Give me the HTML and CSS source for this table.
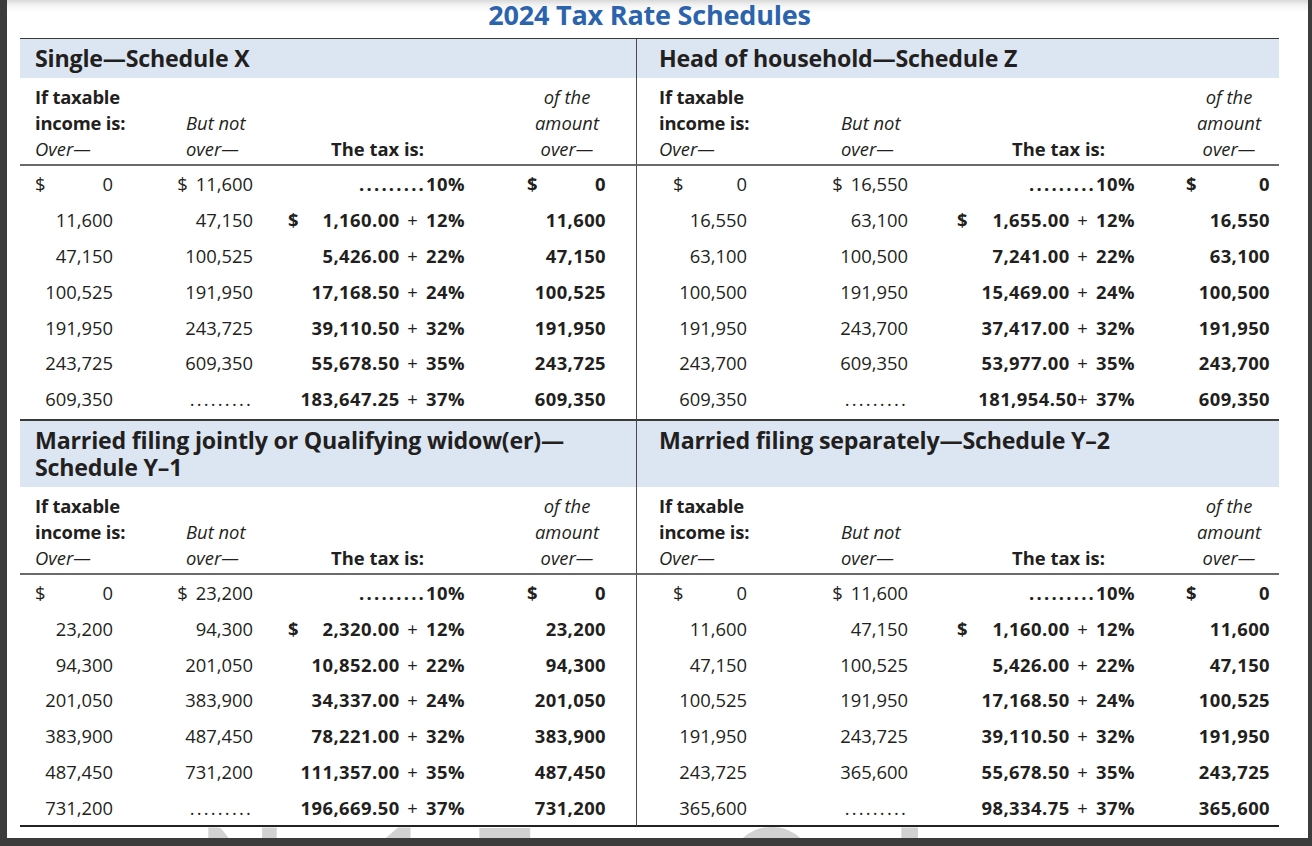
FILE: index.html
```html
<!DOCTYPE html>
<html lang="en">
<head>
<meta charset="utf-8">
<title>2024 Tax Rate Schedules</title>
<link rel="stylesheet" href="styles.css">
</head>
<body>
<div class="page">
  <h1 class="title">2024 Tax Rate Schedules</h1>
  <div class="table">
    <div class="sched">
      <div class="band l">Single—Schedule X</div>
      <div class="band r">Head of household—Schedule Z</div>

      <div class="head l">
        <div class="h1"><b>If taxable</b><b>income is:</b><i>Over—</i></div>
        <div class="h2"><i>But not</i><i>over—</i></div>
        <div class="h3">The tax is:</div>
        <div class="h4"><i>of the</i><i>amount</i><i>over—</i></div>
      </div>
      <div class="head r">
        <div class="h1"><b>If taxable</b><b>income is:</b><i>Over—</i></div>
        <div class="h2"><i>But not</i><i>over—</i></div>
        <div class="h3">The tax is:</div>
        <div class="h4"><i>of the</i><i>amount</i><i>over—</i></div>
      </div>

      <div class="body l">
        <div class="row"><div class="c1"><span class="d">$</span><span>0</span></div><div class="c2"><span>$ 11,600</span></div><div class="c3"><span><span class="dots">.........</span>10%</span></div><div class="c4"><span class="d">$</span><span>0</span></div></div>
        <div class="row"><div class="c1"><span>11,600</span></div><div class="c2"><span>47,150</span></div><div class="c3"><span class="d">$</span><span>1,160.00 <span class="plus">+</span> 12%</span></div><div class="c4"><span>11,600</span></div></div>
        <div class="row"><div class="c1"><span>47,150</span></div><div class="c2"><span>100,525</span></div><div class="c3"><span>5,426.00 <span class="plus">+</span> 22%</span></div><div class="c4"><span>47,150</span></div></div>
        <div class="row"><div class="c1"><span>100,525</span></div><div class="c2"><span>191,950</span></div><div class="c3"><span>17,168.50 <span class="plus">+</span> 24%</span></div><div class="c4"><span>100,525</span></div></div>
        <div class="row"><div class="c1"><span>191,950</span></div><div class="c2"><span>243,725</span></div><div class="c3"><span>39,110.50 <span class="plus">+</span> 32%</span></div><div class="c4"><span>191,950</span></div></div>
        <div class="row"><div class="c1"><span>243,725</span></div><div class="c2"><span>609,350</span></div><div class="c3"><span>55,678.50 <span class="plus">+</span> 35%</span></div><div class="c4"><span>243,725</span></div></div>
        <div class="row"><div class="c1"><span>609,350</span></div><div class="c2"><span class="dots">.........</span></div><div class="c3"><span>183,647.25 <span class="plus">+</span> 37%</span></div><div class="c4"><span>609,350</span></div></div>
      </div>
      <div class="body r">
        <div class="row"><div class="c1"><span class="d">$</span><span>0</span></div><div class="c2"><span>$ 16,550</span></div><div class="c3"><span><span class="dots">.........</span>10%</span></div><div class="c4"><span class="d">$</span><span>0</span></div></div>
        <div class="row"><div class="c1"><span>16,550</span></div><div class="c2"><span>63,100</span></div><div class="c3"><span class="d">$</span><span>1,655.00 <span class="plus">+</span> 12%</span></div><div class="c4"><span>16,550</span></div></div>
        <div class="row"><div class="c1"><span>63,100</span></div><div class="c2"><span>100,500</span></div><div class="c3"><span>7,241.00 <span class="plus">+</span> 22%</span></div><div class="c4"><span>63,100</span></div></div>
        <div class="row"><div class="c1"><span>100,500</span></div><div class="c2"><span>191,950</span></div><div class="c3"><span>15,469.00 <span class="plus">+</span> 24%</span></div><div class="c4"><span>100,500</span></div></div>
        <div class="row"><div class="c1"><span>191,950</span></div><div class="c2"><span>243,700</span></div><div class="c3"><span>37,417.00 <span class="plus">+</span> 32%</span></div><div class="c4"><span>191,950</span></div></div>
        <div class="row"><div class="c1"><span>243,700</span></div><div class="c2"><span>609,350</span></div><div class="c3"><span>53,977.00 <span class="plus">+</span> 35%</span></div><div class="c4"><span>243,700</span></div></div>
        <div class="row"><div class="c1"><span>609,350</span></div><div class="c2"><span class="dots">.........</span></div><div class="c3"><span>181,954.50<span class="plus">+</span> 37%</span></div><div class="c4"><span>609,350</span></div></div>
      </div>
    </div>

    <div class="sched">
      <div class="band l">Married filing jointly or Qualifying widow(er)—<br>Schedule Y–1</div>
      <div class="band r">Married filing separately—Schedule Y–2</div>

      <div class="head l">
        <div class="h1"><b>If taxable</b><b>income is:</b><i>Over—</i></div>
        <div class="h2"><i>But not</i><i>over—</i></div>
        <div class="h3">The tax is:</div>
        <div class="h4"><i>of the</i><i>amount</i><i>over—</i></div>
      </div>
      <div class="head r">
        <div class="h1"><b>If taxable</b><b>income is:</b><i>Over—</i></div>
        <div class="h2"><i>But not</i><i>over—</i></div>
        <div class="h3">The tax is:</div>
        <div class="h4"><i>of the</i><i>amount</i><i>over—</i></div>
      </div>

      <div class="body l last">
        <div class="row"><div class="c1"><span class="d">$</span><span>0</span></div><div class="c2"><span>$ 23,200</span></div><div class="c3"><span><span class="dots">.........</span>10%</span></div><div class="c4"><span class="d">$</span><span>0</span></div></div>
        <div class="row"><div class="c1"><span>23,200</span></div><div class="c2"><span>94,300</span></div><div class="c3"><span class="d">$</span><span>2,320.00 <span class="plus">+</span> 12%</span></div><div class="c4"><span>23,200</span></div></div>
        <div class="row"><div class="c1"><span>94,300</span></div><div class="c2"><span>201,050</span></div><div class="c3"><span>10,852.00 <span class="plus">+</span> 22%</span></div><div class="c4"><span>94,300</span></div></div>
        <div class="row"><div class="c1"><span>201,050</span></div><div class="c2"><span>383,900</span></div><div class="c3"><span>34,337.00 <span class="plus">+</span> 24%</span></div><div class="c4"><span>201,050</span></div></div>
        <div class="row"><div class="c1"><span>383,900</span></div><div class="c2"><span>487,450</span></div><div class="c3"><span>78,221.00 <span class="plus">+</span> 32%</span></div><div class="c4"><span>383,900</span></div></div>
        <div class="row"><div class="c1"><span>487,450</span></div><div class="c2"><span>731,200</span></div><div class="c3"><span>111,357.00 <span class="plus">+</span> 35%</span></div><div class="c4"><span>487,450</span></div></div>
        <div class="row"><div class="c1"><span>731,200</span></div><div class="c2"><span class="dots">.........</span></div><div class="c3"><span>196,669.50 <span class="plus">+</span> 37%</span></div><div class="c4"><span>731,200</span></div></div>
      </div>
      <div class="body r last">
        <div class="row"><div class="c1"><span class="d">$</span><span>0</span></div><div class="c2"><span>$ 11,600</span></div><div class="c3"><span><span class="dots">.........</span>10%</span></div><div class="c4"><span class="d">$</span><span>0</span></div></div>
        <div class="row"><div class="c1"><span>11,600</span></div><div class="c2"><span>47,150</span></div><div class="c3"><span class="d">$</span><span>1,160.00 <span class="plus">+</span> 12%</span></div><div class="c4"><span>11,600</span></div></div>
        <div class="row"><div class="c1"><span>47,150</span></div><div class="c2"><span>100,525</span></div><div class="c3"><span>5,426.00 <span class="plus">+</span> 22%</span></div><div class="c4"><span>47,150</span></div></div>
        <div class="row"><div class="c1"><span>100,525</span></div><div class="c2"><span>191,950</span></div><div class="c3"><span>17,168.50 <span class="plus">+</span> 24%</span></div><div class="c4"><span>100,525</span></div></div>
        <div class="row"><div class="c1"><span>191,950</span></div><div class="c2"><span>243,725</span></div><div class="c3"><span>39,110.50 <span class="plus">+</span> 32%</span></div><div class="c4"><span>191,950</span></div></div>
        <div class="row"><div class="c1"><span>243,725</span></div><div class="c2"><span>365,600</span></div><div class="c3"><span>55,678.50 <span class="plus">+</span> 35%</span></div><div class="c4"><span>243,725</span></div></div>
        <div class="row"><div class="c1"><span>365,600</span></div><div class="c2"><span class="dots">.........</span></div><div class="c3"><span>98,334.75 <span class="plus">+</span> 37%</span></div><div class="c4"><span>365,600</span></div></div>
      </div>
    </div>
  </div>
  <div class="watermark" aria-hidden="true">
    <span class="wm wm-n">N</span>
    <span class="wm wm-1">1</span>
    <span class="wm wm-e">E</span>
    <span class="wm wm-o">O</span>
    <span class="wm wm-i">I</span>
  </div>
</div>
</body>
</html>
```
FILE: styles.css
```css
* { box-sizing: border-box; }
html, body { margin: 0; padding: 0; }
body {
  width: 1312px;
  height: 846px;
  overflow: hidden;
  background: #3c3c3c;
  font-family: "Open Sans", Lato, sans-serif;
  color: #231f20;
}
.page {
  margin-left: 7px;
  width: 1301px;
  height: 838px;
  padding-left: 13px;
  background: linear-gradient(to bottom, #d9d9d9 0px, #f2f2f2 5px, #ffffff 12px);
  position: relative;
  overflow: hidden;
}
.title {
  width: 1259px;
  height: 38px;
  margin: 0;
  text-align: center;
  font-size: 27px;
  font-weight: 700;
  line-height: 29px;
  letter-spacing: -0.2px;
  color: #2b63ad;
}
.table {
  width: 1259px;
  border-top: 1.5px solid #3a3a3a;
}
.sched {
  display: grid;
  grid-template-columns: 617px 642px;
}
.l { border-right: 1.5px solid #4a4a4a; }
.band {
  background: #dce6f2;
  padding: 6px 0 6px 15px;
  font-size: 23.2px;
  font-weight: 700;
  line-height: 27px;
  letter-spacing: -0.2px;
}
.band.r { padding-left: 22px; }

.head {
  display: grid;
  padding: 6px 0 2px;
  border-bottom: 2px solid #6a6a6a;
  font-size: 18.4px;
  line-height: 26px;
}
.head > div { display: flex; flex-direction: column; }
.head b { font-weight: 700; letter-spacing: -0.2px; }
.head i { font-style: italic; }
.head.l, .body.l .row { grid-template-columns: 113px 120px 212px 141px 29px; }
.head.r, .body.r .row { grid-template-columns: 130px 141px 227px 135px 9px; }

.h1 { padding-left: 15px; white-space: nowrap; }
.r .h1 { padding-left: 22px; }
.h2 { padding-top: 26px; padding-left: 53px; }
.r .h2 { padding-left: 74px; }
.h3 { padding-top: 52px; font-weight: 700; text-align: right; padding-right: 41px; }
.r .h3 { padding-right: 30px; }
.h4 { align-items: center; padding-left: 63px; }
.r .h4 { padding-left: 53px; }

.body {
  padding-bottom: 2px;
  border-bottom: 2px solid #3a3a3a;
  font-size: 18.4px;
}
.body.last { padding-bottom: 0; border-bottom-color: #222; }
.row {
  display: grid;
  height: 35.8px;
  align-items: center;
  white-space: nowrap;
}
.row > div { display: flex; justify-content: flex-end; align-items: baseline; }
.c1 { padding-left: 15px; padding-right: 20px; }
.r .c1 { padding-left: 36px; }
.c2 { word-spacing: 3px; }
.c3 { padding-left: 35px; font-weight: 700; letter-spacing: 0.45px; word-spacing: 2.5px; }
.r .c3 { padding-left: 49px; }
.c4 { padding-left: 62px; font-weight: 700; letter-spacing: 0.4px; }
.r .c4 { padding-left: 51px; }
.d { margin-right: auto; }
.plus { font-weight: 400; }
.c2 .dots, .c3 .dots { letter-spacing: 2.2px; }

.watermark {
  position: relative;
  height: 14px;
  overflow: hidden;
}
.wm {
  position: absolute;
  top: 0;
  height: 14px;
  overflow: hidden;
  font-family: Lato, sans-serif;
  font-size: 110px;
  line-height: 77px;
  font-weight: 900;
  color: #d2d2d2;
}
.wm-n { left: 180px; }
.wm-1 { left: 347px; }
.wm-e { left: 451px; }
.wm-o { left: 707px; }
.wm-i { left: 873px; }
```
